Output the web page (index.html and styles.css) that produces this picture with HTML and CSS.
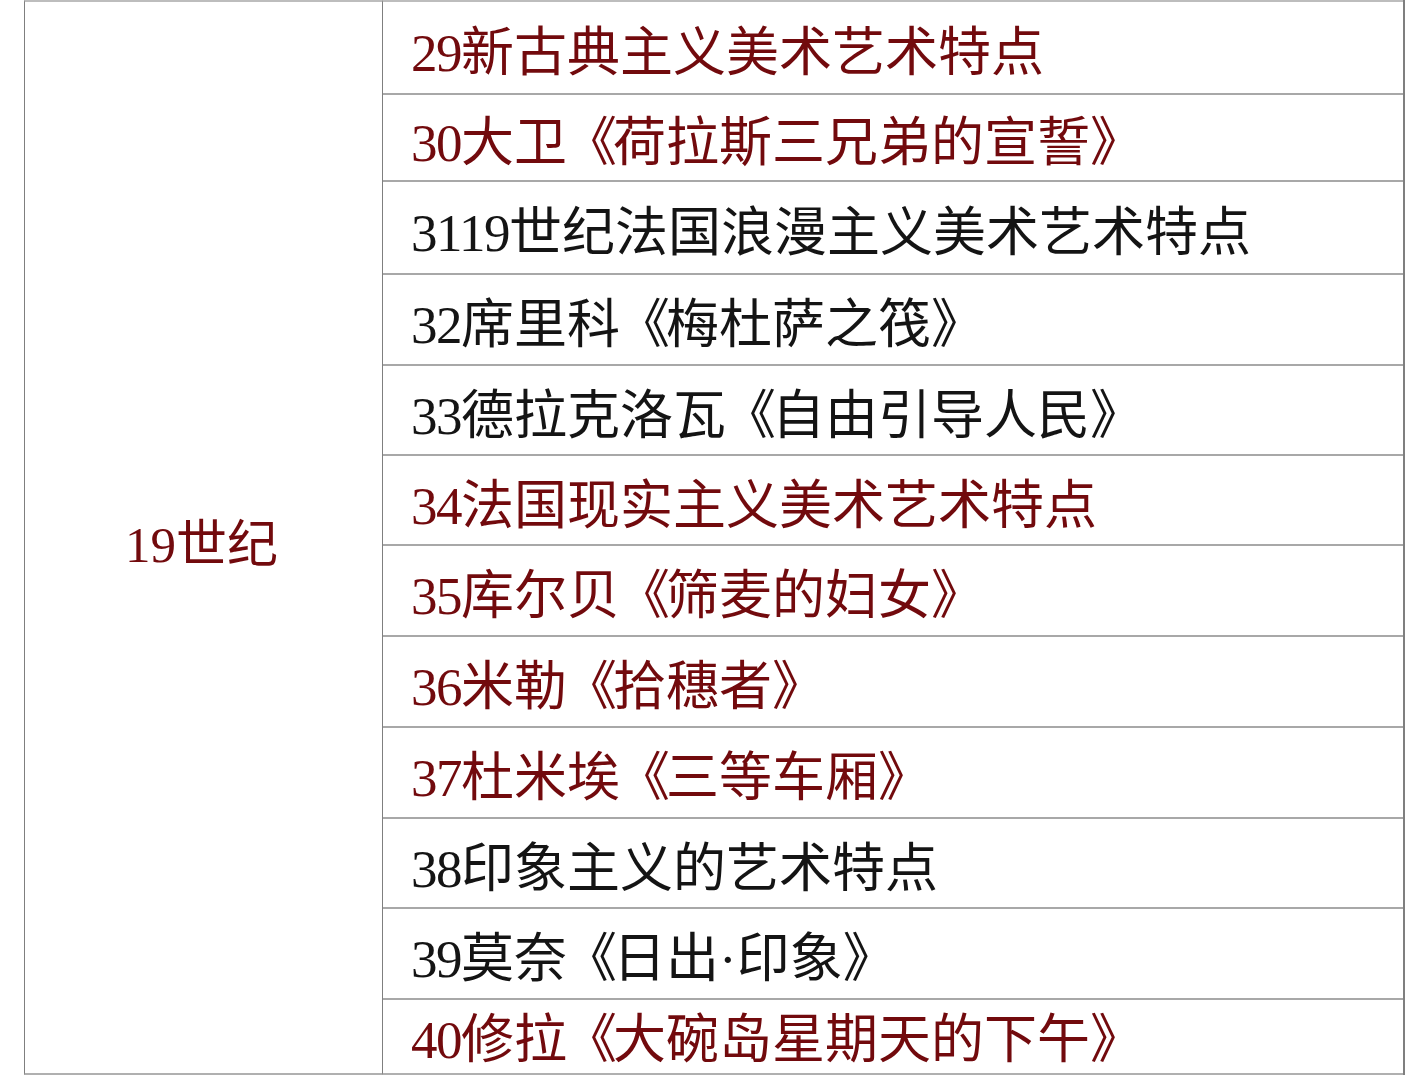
FILE: index.html
```html
<!DOCTYPE html>
<html lang="zh-CN">
<head>
<meta charset="utf-8">
<title>19世纪</title>
<link rel="stylesheet" href="styles.css">
</head>
<body>
<div class="sheet">
  <div class="era"><span class="red">19世纪</span></div>
  <div class="items">
    <div class="row h93 red"><span class="n">29</span>新古典主义美术艺术特点</div>
    <div class="row h87 red"><span class="n">30</span>大卫<span class="b">《</span>荷拉斯三兄弟的宣誓》</div>
    <div class="row h93"><span class="n">3119</span>世纪法国浪漫主义美术艺术特点</div>
    <div class="row h91"><span class="n">32</span>席里科<span class="b">《</span>梅杜萨之筏》</div>
    <div class="row h90"><span class="n">33</span>德拉克洛瓦<span class="b">《</span>自由引导人民》</div>
    <div class="row h90 red"><span class="n">34</span>法国现实主义美术艺术特点</div>
    <div class="row h91 red"><span class="n">35</span>库尔贝<span class="b">《</span>筛麦的妇女》</div>
    <div class="row h91 red"><span class="n">36</span>米勒<span class="b">《</span>拾穗者》</div>
    <div class="row h91 red"><span class="n">37</span>杜米埃<span class="b">《</span>三等车厢》</div>
    <div class="row h90"><span class="n">38</span>印象主义的艺术特点</div>
    <div class="row h91"><span class="n">39</span>莫奈<span class="b">《</span>日出·印象》</div>
    <div class="row h77 last red"><span class="n">40</span>修拉<span class="b">《</span>大碗岛星期天的下午》</div>
  </div>
</div>
</body>
</html>
```

FILE: styles.css
```css
html, body {
  margin: 0;
  padding: 0;
  background: #ffffff;
}
body {
  font-family: "Liberation Serif", "Noto Sans CJK SC", serif;
  color: #141414;
  overflow: hidden;
}
.sheet {
  display: grid;
  grid-template-columns: 359px 1022px;
  margin-left: 24px;
  width: 1381px;
}
.era {
  border-left: 1px solid #7f7f7f;
  border-right: 1px solid #7f7f7f;
  border-top: 2px solid #bdbdbd;
  border-bottom: 2px solid #b0b0b0;
  display: flex;
  align-items: center;
  justify-content: center;
  font-size: 51px;
  line-height: 1;
  padding-top: 16px;
  padding-right: 4px;
  box-sizing: border-box;
}
.items {
  display: flex;
  flex-direction: column;
  border-right: 2px solid #7f7f7f;
}
.row {
  box-sizing: border-box;
  border-top: 2px solid #a8a8a8;
  display: flex;
  align-items: center;
  padding-left: 28px;
  padding-top: 12px;
  font-size: 53px;
  line-height: 1;
  white-space: nowrap;
}
.n {
  letter-spacing: -1.5px;
}
.b {
  margin-left: -3px;
  letter-spacing: -4px;
}
.row:first-child {
  border-top-color: #bdbdbd;
}
.last {
  border-bottom: 2px solid #b0b0b0;
  padding-top: 8px;
}
.red {
  color: #720a0d;
}
.h93 { height: 93px; }
.h87 { height: 87px; }
.h91 { height: 91px; }
.h90 { height: 90px; }
.h77 { height: 77px; }
```
